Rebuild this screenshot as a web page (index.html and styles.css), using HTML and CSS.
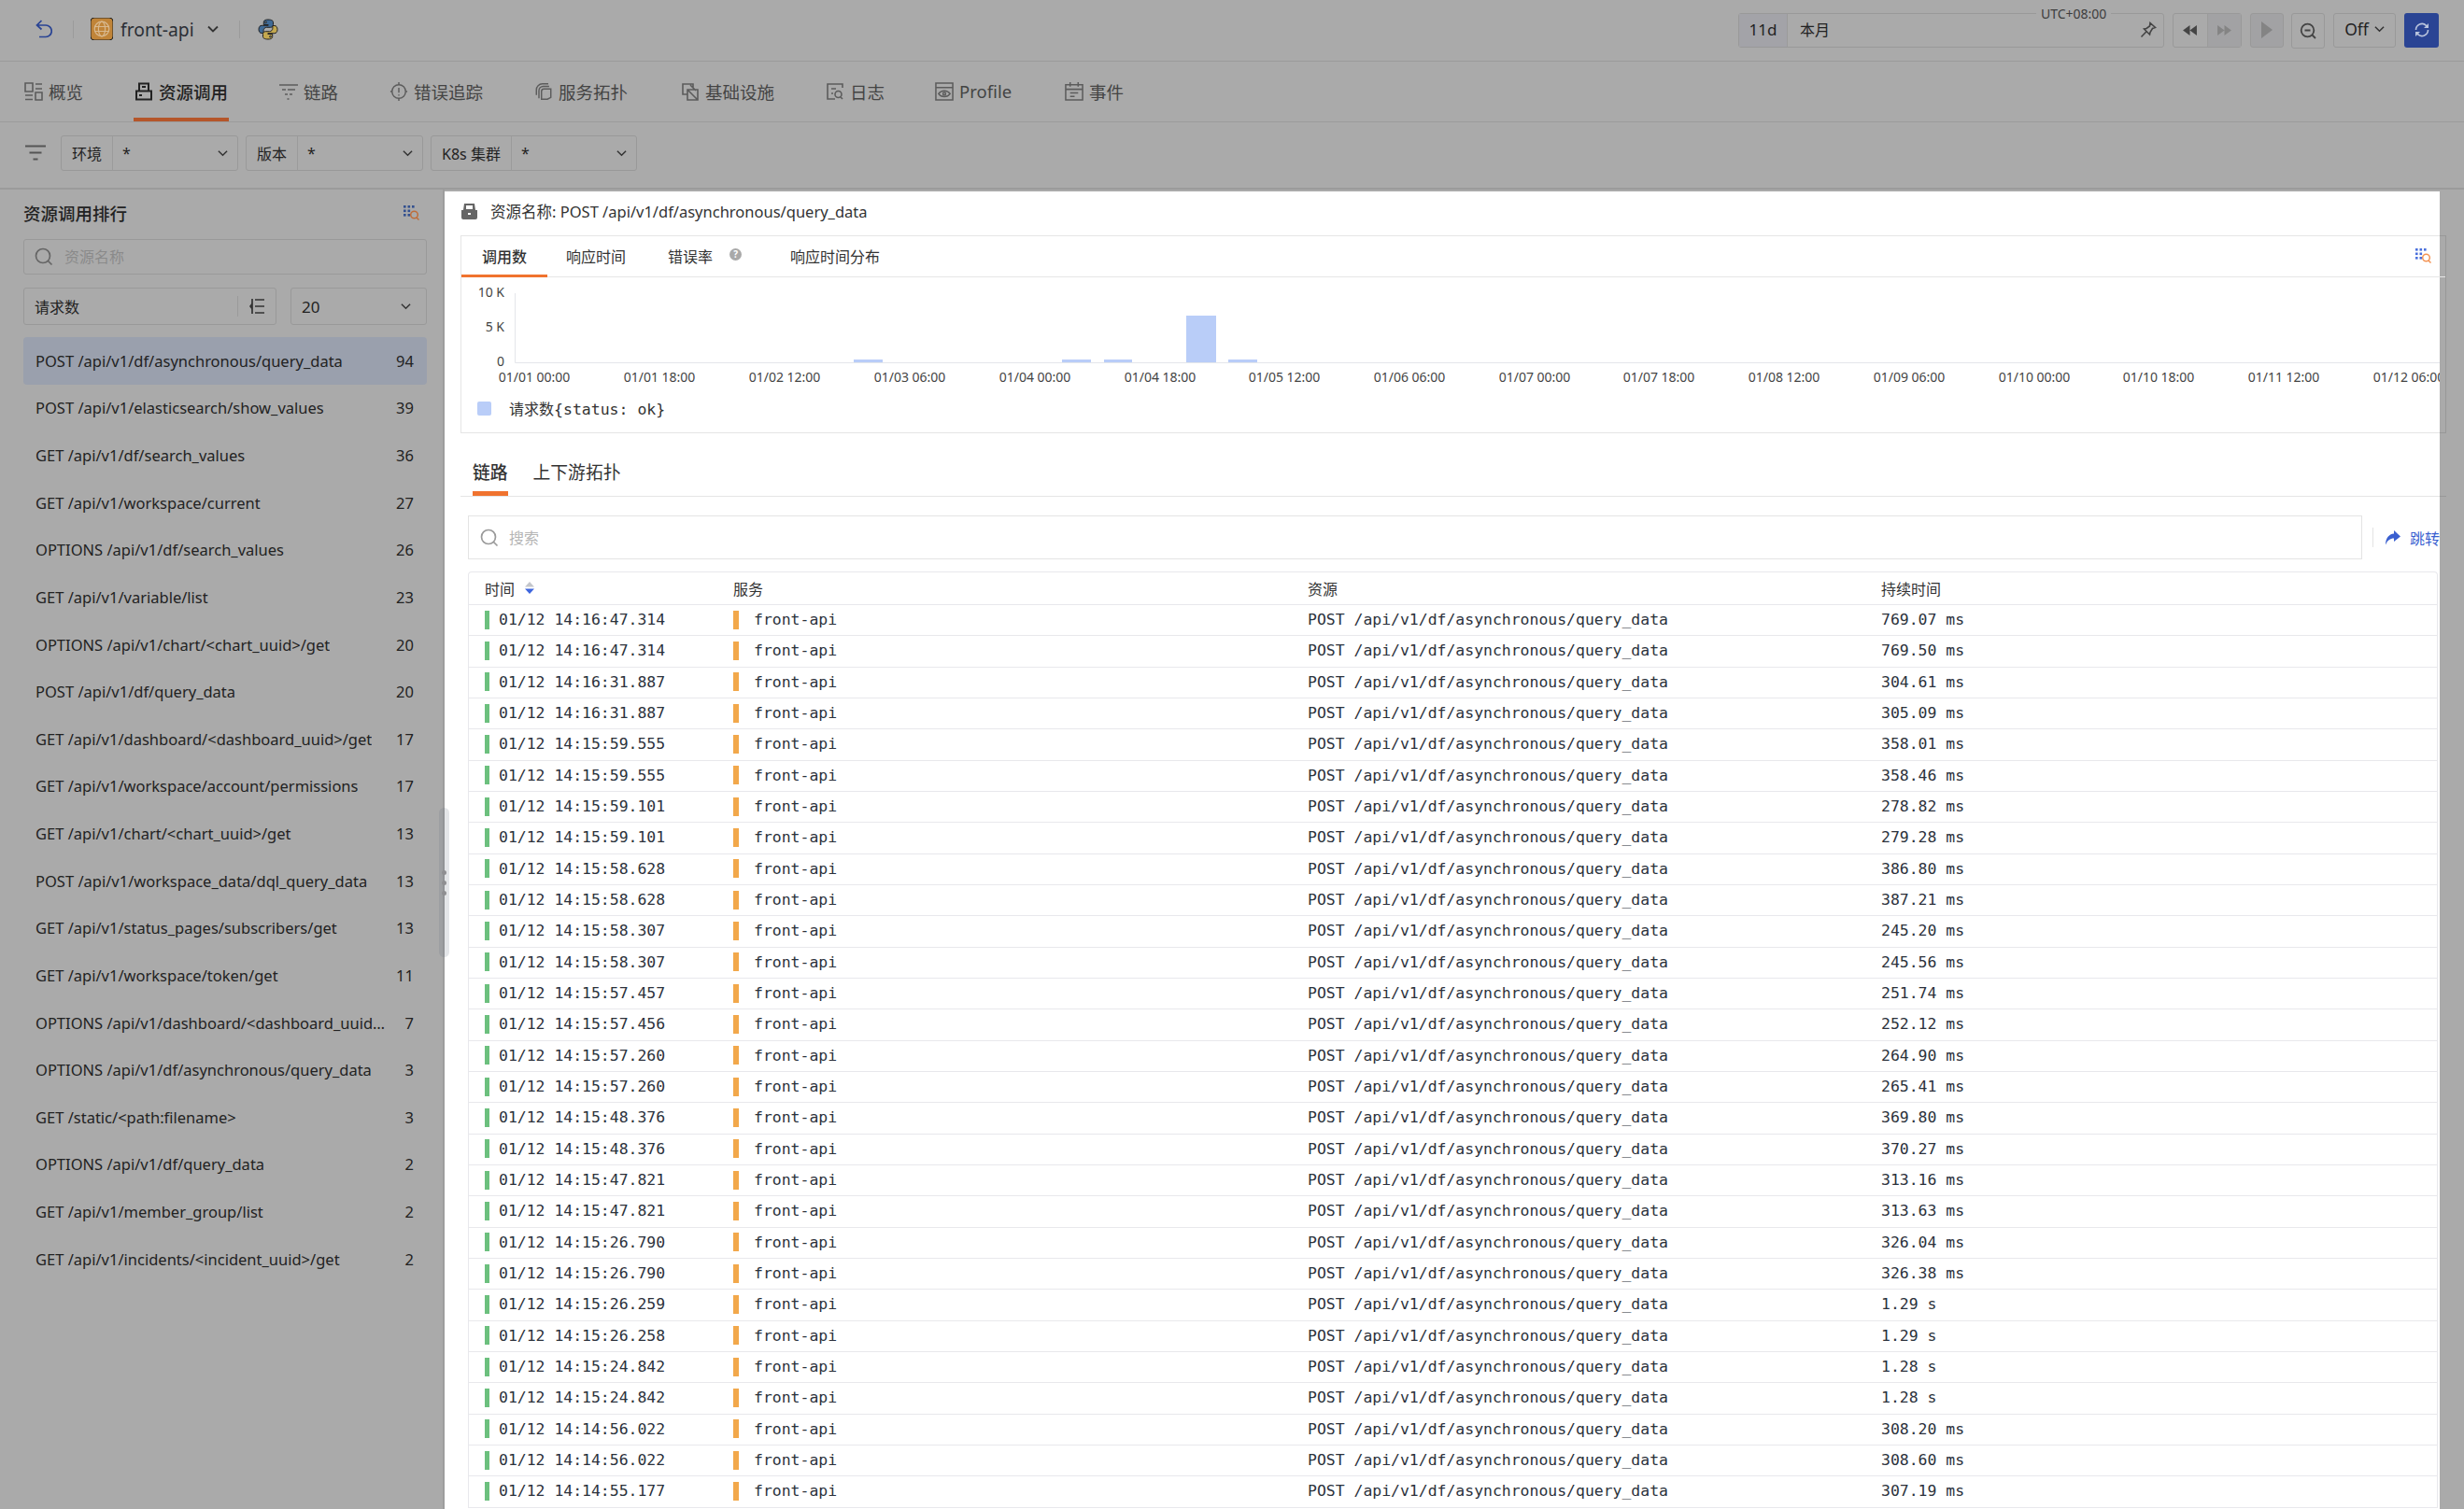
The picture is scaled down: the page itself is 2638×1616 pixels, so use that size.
FILE: index.html
```html
<!DOCTYPE html>
<html lang="zh">
<head>
<meta charset="utf-8">
<title>资源调用</title>
<link rel="stylesheet" href="styles.css">
</head>
<body>
<div class="page">
  <header class="topbar">
    <svg class="i-back" viewBox="0 0 18 20"><path d="M6.500 1 1.500 6 6.500 10.500M1.500 6H11a5.800 5.800 0 0 1 0 12.500H4"/></svg>
    <span class="vline v1"></span>
    <svg class="i-logo" viewBox="0 0 24 24"><rect width="24" height="24" rx="4" fill="#c08438"/><g fill="none" stroke="#d8b98f" stroke-width="1.200"><circle cx="12" cy="12" r="7.800"/><ellipse cx="12" cy="12" rx="3.600" ry="7.800"/><path d="M4.500 9.500h15M4.500 14.500h15"/></g></svg>
    <span class="app-name">front-api</span>
    <svg class="i-chev big" viewBox="0 0 12 8"><path d="M1 1.500 6 6.500 11 1.500"/></svg>
    <span class="vline v2"></span>
    <svg class="i-py" viewBox="0 0 22 23"><path fill="#3f6a96" d="M11 1C6.800 1 6.300 2.600 6.300 4v2.500h4.900v.8H4.300C2.300 7.300 1 8.900 1 11.400s1.300 4.100 3.100 4.100h2v-2.800c0-1.900 1.600-3.400 3.400-3.400h4.200c1.500 0 2.800-1.200 2.800-2.800V4c0-1.700-1.400-3-5.500-3z"/><path fill="#c4a84f" d="M11 22c4.200 0 4.700-1.600 4.700-3v-2.500h-4.900v-.8h6.900c2 0 3.300-1.600 3.300-4.100s-1.300-4.100-3.100-4.100h-2v2.800c0 1.900-1.600 3.400-3.400 3.400H8.300c-1.500 0-2.800 1.200-2.800 2.800V19c0 1.700 1.400 3 5.500 3z"/><circle cx="8.500" cy="3.800" r=".9" fill="#aaa"/><circle cx="13.500" cy="19.200" r=".9" fill="#aaa"/></svg>
    <div class="tools">
      <div class="timebox">
        <span class="t-len">11d</span>
        <span class="t-val">本月</span>
        <span class="t-utc">UTC+08:00</span>
        <svg class="i-pin" viewBox="0 0 18 18"><path d="M11 1.500 16.500 6.500 13.500 7.500 11 11.500 10.500 14 4.500 8 7 7.500 10.500 5zM6.800 11 1.500 16.500"/></svg>
      </div>
      <div class="btn-pair">
        <span class="tbtn"><svg class="i-tri" viewBox="0 0 18 14"><path d="M9 1v12L1 7zM17 1v12L9 7z"/></svg></span>
        <span class="tbtn off"><svg class="i-tri dim" viewBox="0 0 18 14"><path d="M1 1v12l8-6zM9 1v12l8-6z"/></svg></span>
      </div>
      <span class="tbtn solo off"><svg class="i-play" viewBox="0 0 12 18"><path d="M0 0v18l12-9z"/></svg></span>
      <span class="tbtn solo tall"><svg class="i-zoom" viewBox="0 0 18 18"><circle cx="8.500" cy="8.500" r="6.800"/><path d="M5.500 8.500h6M13.500 13.500l3.500 3.500"/></svg></span>
      <span class="tbtn off-sel">Off <svg class="i-chev" viewBox="0 0 12 8"><path d="M1 1.500 6 6.500 11 1.500"/></svg></span>
      <span class="refresh"><svg viewBox="0 0 18 18"><path d="M2.500 9a6.500 6.500 0 0 1 11-4.700L15.500 6M15.500 9a6.500 6.500 0 0 1-11 4.700L2.500 12"/><path class="fillp" d="M16 2v5h-5zM2 16v-5h5z"/></svg></span>
    </div>
  </header>

  <nav class="navtabs">
    <a class="nav n1"><svg viewBox="0 0 20 20"><path d="M1 1h8v9H1zM12 2h7M12 7h7M1 14h8M1 18.500h8M12 11h7v8h-7z"/></svg>概览</a>
    <a class="nav n2 on"><svg viewBox="0 0 20 20"><path d="M5 1.500h10v8H5zM2 9.500h16v9H2zM8 5h4M5 14h3"/></svg>资源调用</a>
    <a class="nav n3"><svg viewBox="0 0 20 20"><path d="M0 3h20M3 8h4M9 8h8M6 13h3M11 13h3M8.500 18h2"/></svg>链路</a>
    <a class="nav n4"><svg viewBox="0 0 20 22"><circle cx="10" cy="11" r="8"/><path d="M10 0v3M10 19v3M10 6.500v6M10 14.500v1.500M0 11h2M18 11h2"/></svg>错误追踪</a>
    <a class="nav n5"><svg viewBox="0 0 21 22"><path d="M2 15V9a7 7 0 0 1 7-7h7M5 19V10a5 5 0 0 1 5-5h7M8 20V11a3 3 0 0 1 3-3h8v10l-4 2z"/></svg>服务拓扑</a>
    <a class="nav n6"><svg viewBox="0 0 20 20"><path d="M13 6V2H2v11h5M7 8h11v11H7zM7 8l11 11M10 3l6 6"/></svg>基础设施</a>
    <a class="nav n7"><svg viewBox="0 0 18 20"><path d="M17 6V2H1v16h8M5 7h5M5 12h2M17 18l-2-2"/><circle cx="12.500" cy="13" r="3.500"/></svg>日志</a>
    <a class="nav n8"><svg viewBox="0 0 21 21"><path d="M1 1h19v19H1zM1 6h19M4 13c3-4.500 10-4.500 13 0-3 4.500-10 4.500-13 0z"/><circle cx="10.500" cy="13" r="1.500"/></svg>Profile</a>
    <a class="nav n9"><svg viewBox="0 0 21 21"><path d="M1 3h19v17H1zM6 0v5M15 0v5M1 8h19M6 12h9M6 16h5"/></svg>事件</a>
  </nav>

  <div class="filters">
    <svg class="i-filter" viewBox="0 0 22 17"><path d="M0 1.500h22M4.500 8.500h13M8.500 15.500h5"/></svg>
    <div class="fsel w190"><span class="flabel w55">环境</span><span class="fval">*</span><svg class="i-chev" viewBox="0 0 12 8"><path d="M1 1.500 6 6.500 11 1.500"/></svg></div>
    <div class="fsel w190"><span class="flabel w55">版本</span><span class="fval">*</span><svg class="i-chev" viewBox="0 0 12 8"><path d="M1 1.500 6 6.500 11 1.500"/></svg></div>
    <div class="fsel w221"><span class="flabel w86">K8s 集群</span><span class="fval">*</span><svg class="i-chev" viewBox="0 0 12 8"><path d="M1 1.500 6 6.500 11 1.500"/></svg></div>
  </div>

  <main class="main">
    <aside class="sidebar">
      <div class="side-title"><h2>资源调用排行</h2>
        <svg class="i-grid" viewBox="0 0 17 16"><g fill="#33508f"><rect x="0" y="0" width="2.600" height="2.600"/><rect x="4.500" y="0" width="2.600" height="2.600"/><rect x="9" y="0" width="2.600" height="2.600"/><rect x="0" y="4.500" width="2.600" height="2.600"/><rect x="4.500" y="4.500" width="2.600" height="2.600"/><rect x="0" y="9" width="2.600" height="2.600"/><rect x="4.500" y="9" width="2.600" height="2.600"/></g><circle cx="11.500" cy="10" r="3.800" fill="none" stroke="#bf6d3a" stroke-width="1.500"/><path d="M14 13l2.500 2.500" stroke="#bf6d3a" stroke-width="1.500"/></svg>
      </div>
      <div class="side-search"><svg class="i-search" viewBox="0 0 20 20"><circle cx="9" cy="9" r="7.500"/><path d="M14.500 14.500l4 4"/></svg><span>资源名称</span></div>
      <div class="side-sel">
        <div class="sel-metric"><span>请求数</span><svg class="i-sort" viewBox="0 0 16 18"><path d="M6 2h10M6 9h10M6 16h10M3 1v16"/><path class="fillp" d="M3 5 0 9l3 4z"/></svg></div>
        <div class="sel-top"><span>20</span><svg class="i-chev" viewBox="0 0 12 8"><path d="M1 1.500 6 6.500 11 1.500"/></svg></div>
      </div>
      <ul class="rank">
        <li class="on"><span>POST /api/v1/df/asynchronous/query_data</span><b>94</b></li>
        <li><span>POST /api/v1/elasticsearch/show_values</span><b>39</b></li>
        <li><span>GET /api/v1/df/search_values</span><b>36</b></li>
        <li><span>GET /api/v1/workspace/current</span><b>27</b></li>
        <li><span>OPTIONS /api/v1/df/search_values</span><b>26</b></li>
        <li><span>GET /api/v1/variable/list</span><b>23</b></li>
        <li><span>OPTIONS /api/v1/chart/&lt;chart_uuid&gt;/get</span><b>20</b></li>
        <li><span>POST /api/v1/df/query_data</span><b>20</b></li>
        <li><span>GET /api/v1/dashboard/&lt;dashboard_uuid&gt;/get</span><b>17</b></li>
        <li><span>GET /api/v1/workspace/account/permissions</span><b>17</b></li>
        <li><span>GET /api/v1/chart/&lt;chart_uuid&gt;/get</span><b>13</b></li>
        <li><span>POST /api/v1/workspace_data/dql_query_data</span><b>13</b></li>
        <li><span>GET /api/v1/status_pages/subscribers/get</span><b>13</b></li>
        <li><span>GET /api/v1/workspace/token/get</span><b>11</b></li>
        <li><span>OPTIONS /api/v1/dashboard/&lt;dashboard_uuid&gt;/get</span><b>7</b></li>
        <li><span>OPTIONS /api/v1/df/asynchronous/query_data</span><b>3</b></li>
        <li><span>GET /static/&lt;path:filename&gt;</span><b>3</b></li>
        <li><span>OPTIONS /api/v1/df/query_data</span><b>2</b></li>
        <li><span>GET /api/v1/member_group/list</span><b>2</b></li>
        <li><span>GET /api/v1/incidents/&lt;incident_uuid&gt;/get</span><b>2</b></li>
      </ul>
    </aside>
  </main>

  <section class="drawer">
    <div class="drawer-head">
      <svg class="i-lock" viewBox="0 0 17 17"><path fill="#666" d="M3 0h11l1 7h2v8a2 2 0 0 1-2 2H2a2 2 0 0 1-2-2V7h2zM5 2v4h7V2zM7 10v2h3v-2z"/></svg>
      <span>资源名称: POST /api/v1/df/asynchronous/query_data</span>
    </div>
    <div class="panel">
      <div class="ptabs">
        <a class="ptab p1 on">调用数</a>
        <a class="ptab p2">响应时间</a>
        <a class="ptab p3">错误率</a>
        <span class="qmark">?</span>
        <a class="ptab p4">响应时间分布</a>
        <svg class="i-grid pgrid" viewBox="0 0 17 16"><g fill="#4a6fdc"><rect x="0" y="0" width="2.600" height="2.600"/><rect x="4.500" y="0" width="2.600" height="2.600"/><rect x="9" y="0" width="2.600" height="2.600"/><rect x="0" y="4.500" width="2.600" height="2.600"/><rect x="4.500" y="4.500" width="2.600" height="2.600"/><rect x="0" y="9" width="2.600" height="2.600"/><rect x="4.500" y="9" width="2.600" height="2.600"/></g><circle cx="11.500" cy="10" r="3.800" fill="none" stroke="#f39455" stroke-width="1.500"/><path d="M14 13l2.500 2.500" stroke="#f39455" stroke-width="1.500"/></svg>
      </div>
      <svg class="chart" width="2118" height="122" viewBox="0 0 2118 122">
        <path class="axis" d="M57.500 17V91.500H2118"/>
        <g class="bars">
          <rect x="420" y="88" width="31" height="3"/>
          <rect x="643" y="88" width="31" height="3"/>
          <rect x="688" y="88" width="30" height="3"/>
          <rect x="776" y="41" width="32" height="50"/>
          <rect x="821" y="88" width="31" height="3"/>
        </g>
        <g class="ylab">
          <text x="46" y="21">10 K</text>
          <text x="46" y="58">5 K</text>
          <text x="46" y="95">0</text>
        </g>
        <g class="xlab">
          <text x="78" y="112">01/01 00:00</text>
          <text x="212" y="112">01/01 18:00</text>
          <text x="346" y="112">01/02 12:00</text>
          <text x="480" y="112">01/03 06:00</text>
          <text x="614" y="112">01/04 00:00</text>
          <text x="748" y="112">01/04 18:00</text>
          <text x="881" y="112">01/05 12:00</text>
          <text x="1015" y="112">01/06 06:00</text>
          <text x="1149" y="112">01/07 00:00</text>
          <text x="1282" y="112">01/07 18:00</text>
          <text x="1416" y="112">01/08 12:00</text>
          <text x="1550" y="112">01/09 06:00</text>
          <text x="1684" y="112">01/10 00:00</text>
          <text x="1817" y="112">01/10 18:00</text>
          <text x="1951" y="112">01/11 12:00</text>
          <text x="2085" y="112">01/12 06:00</text>
        </g>
      </svg>
      <div class="legend"><i></i><span>请求数<code>{status: ok}</code></span></div>
    </div>
    <div class="subtabs">
      <a class="stab on">链路</a>
      <a class="stab">上下游拓扑</a>
    </div>
    <div class="searchrow">
      <div class="searchbox"><svg class="i-search" viewBox="0 0 20 20"><circle cx="9" cy="9" r="7.500"/><path d="M14.500 14.500l4 4"/></svg><span>搜索</span></div>
      <span class="sep"></span>
      <a class="jump"><svg viewBox="0 0 17 16"><path d="M10 0l7 6.500L10 12V8.500C6 8.500 3 10.500 1 15.500 1 8.500 4.500 4 10 3.500z"/></svg>跳转</a>
    </div>
    <div class="table">
      <div class="row head">
        <span class="c-time">时间<svg class="i-sortcol" viewBox="0 0 10 13"><path fill="#c4c6cc" d="M5 0l5 5.500H0z"/><path fill="#3f66de" d="M5 13l5-5.500H0z"/></svg></span>
        <span>服务</span><span>资源</span><span>持续时间</span>
      </div>
      <div class="row"><span class="c-time"><i class="bar ok"></i>01/12 14:16:47.314</span><span class="c-svc"><i class="bar svc"></i>front-api</span><span>POST /api/v1/df/asynchronous/query_data</span><span>769.07 ms</span></div>
      <div class="row"><span class="c-time"><i class="bar ok"></i>01/12 14:16:47.314</span><span class="c-svc"><i class="bar svc"></i>front-api</span><span>POST /api/v1/df/asynchronous/query_data</span><span>769.50 ms</span></div>
      <div class="row"><span class="c-time"><i class="bar ok"></i>01/12 14:16:31.887</span><span class="c-svc"><i class="bar svc"></i>front-api</span><span>POST /api/v1/df/asynchronous/query_data</span><span>304.61 ms</span></div>
      <div class="row"><span class="c-time"><i class="bar ok"></i>01/12 14:16:31.887</span><span class="c-svc"><i class="bar svc"></i>front-api</span><span>POST /api/v1/df/asynchronous/query_data</span><span>305.09 ms</span></div>
      <div class="row"><span class="c-time"><i class="bar ok"></i>01/12 14:15:59.555</span><span class="c-svc"><i class="bar svc"></i>front-api</span><span>POST /api/v1/df/asynchronous/query_data</span><span>358.01 ms</span></div>
      <div class="row"><span class="c-time"><i class="bar ok"></i>01/12 14:15:59.555</span><span class="c-svc"><i class="bar svc"></i>front-api</span><span>POST /api/v1/df/asynchronous/query_data</span><span>358.46 ms</span></div>
      <div class="row"><span class="c-time"><i class="bar ok"></i>01/12 14:15:59.101</span><span class="c-svc"><i class="bar svc"></i>front-api</span><span>POST /api/v1/df/asynchronous/query_data</span><span>278.82 ms</span></div>
      <div class="row"><span class="c-time"><i class="bar ok"></i>01/12 14:15:59.101</span><span class="c-svc"><i class="bar svc"></i>front-api</span><span>POST /api/v1/df/asynchronous/query_data</span><span>279.28 ms</span></div>
      <div class="row"><span class="c-time"><i class="bar ok"></i>01/12 14:15:58.628</span><span class="c-svc"><i class="bar svc"></i>front-api</span><span>POST /api/v1/df/asynchronous/query_data</span><span>386.80 ms</span></div>
      <div class="row"><span class="c-time"><i class="bar ok"></i>01/12 14:15:58.628</span><span class="c-svc"><i class="bar svc"></i>front-api</span><span>POST /api/v1/df/asynchronous/query_data</span><span>387.21 ms</span></div>
      <div class="row"><span class="c-time"><i class="bar ok"></i>01/12 14:15:58.307</span><span class="c-svc"><i class="bar svc"></i>front-api</span><span>POST /api/v1/df/asynchronous/query_data</span><span>245.20 ms</span></div>
      <div class="row"><span class="c-time"><i class="bar ok"></i>01/12 14:15:58.307</span><span class="c-svc"><i class="bar svc"></i>front-api</span><span>POST /api/v1/df/asynchronous/query_data</span><span>245.56 ms</span></div>
      <div class="row"><span class="c-time"><i class="bar ok"></i>01/12 14:15:57.457</span><span class="c-svc"><i class="bar svc"></i>front-api</span><span>POST /api/v1/df/asynchronous/query_data</span><span>251.74 ms</span></div>
      <div class="row"><span class="c-time"><i class="bar ok"></i>01/12 14:15:57.456</span><span class="c-svc"><i class="bar svc"></i>front-api</span><span>POST /api/v1/df/asynchronous/query_data</span><span>252.12 ms</span></div>
      <div class="row"><span class="c-time"><i class="bar ok"></i>01/12 14:15:57.260</span><span class="c-svc"><i class="bar svc"></i>front-api</span><span>POST /api/v1/df/asynchronous/query_data</span><span>264.90 ms</span></div>
      <div class="row"><span class="c-time"><i class="bar ok"></i>01/12 14:15:57.260</span><span class="c-svc"><i class="bar svc"></i>front-api</span><span>POST /api/v1/df/asynchronous/query_data</span><span>265.41 ms</span></div>
      <div class="row"><span class="c-time"><i class="bar ok"></i>01/12 14:15:48.376</span><span class="c-svc"><i class="bar svc"></i>front-api</span><span>POST /api/v1/df/asynchronous/query_data</span><span>369.80 ms</span></div>
      <div class="row"><span class="c-time"><i class="bar ok"></i>01/12 14:15:48.376</span><span class="c-svc"><i class="bar svc"></i>front-api</span><span>POST /api/v1/df/asynchronous/query_data</span><span>370.27 ms</span></div>
      <div class="row"><span class="c-time"><i class="bar ok"></i>01/12 14:15:47.821</span><span class="c-svc"><i class="bar svc"></i>front-api</span><span>POST /api/v1/df/asynchronous/query_data</span><span>313.16 ms</span></div>
      <div class="row"><span class="c-time"><i class="bar ok"></i>01/12 14:15:47.821</span><span class="c-svc"><i class="bar svc"></i>front-api</span><span>POST /api/v1/df/asynchronous/query_data</span><span>313.63 ms</span></div>
      <div class="row"><span class="c-time"><i class="bar ok"></i>01/12 14:15:26.790</span><span class="c-svc"><i class="bar svc"></i>front-api</span><span>POST /api/v1/df/asynchronous/query_data</span><span>326.04 ms</span></div>
      <div class="row"><span class="c-time"><i class="bar ok"></i>01/12 14:15:26.790</span><span class="c-svc"><i class="bar svc"></i>front-api</span><span>POST /api/v1/df/asynchronous/query_data</span><span>326.38 ms</span></div>
      <div class="row"><span class="c-time"><i class="bar ok"></i>01/12 14:15:26.259</span><span class="c-svc"><i class="bar svc"></i>front-api</span><span>POST /api/v1/df/asynchronous/query_data</span><span>1.29 s</span></div>
      <div class="row"><span class="c-time"><i class="bar ok"></i>01/12 14:15:26.258</span><span class="c-svc"><i class="bar svc"></i>front-api</span><span>POST /api/v1/df/asynchronous/query_data</span><span>1.29 s</span></div>
      <div class="row"><span class="c-time"><i class="bar ok"></i>01/12 14:15:24.842</span><span class="c-svc"><i class="bar svc"></i>front-api</span><span>POST /api/v1/df/asynchronous/query_data</span><span>1.28 s</span></div>
      <div class="row"><span class="c-time"><i class="bar ok"></i>01/12 14:15:24.842</span><span class="c-svc"><i class="bar svc"></i>front-api</span><span>POST /api/v1/df/asynchronous/query_data</span><span>1.28 s</span></div>
      <div class="row"><span class="c-time"><i class="bar ok"></i>01/12 14:14:56.022</span><span class="c-svc"><i class="bar svc"></i>front-api</span><span>POST /api/v1/df/asynchronous/query_data</span><span>308.20 ms</span></div>
      <div class="row"><span class="c-time"><i class="bar ok"></i>01/12 14:14:56.022</span><span class="c-svc"><i class="bar svc"></i>front-api</span><span>POST /api/v1/df/asynchronous/query_data</span><span>308.60 ms</span></div>
      <div class="row"><span class="c-time"><i class="bar ok"></i>01/12 14:14:55.177</span><span class="c-svc"><i class="bar svc"></i>front-api</span><span>POST /api/v1/df/asynchronous/query_data</span><span>307.19 ms</span></div>
    </div>
  </section>

  <div class="handle"><i></i><i></i><i></i></div>
</div>
</body>
</html>
```
FILE: styles.css
```css
* { box-sizing: border-box; }
html, body { margin: 0; padding: 0; }
body { font-family: "Noto Sans", "Noto Sans CJK SC", sans-serif; font-size: 16px; color: #222; background: #aaa; }
a { color: inherit; text-decoration: none; }
svg { display: block; flex: none; fill: none; stroke: currentColor; }
.page { position: relative; width: 2638px; height: 1616px; overflow: hidden; background: #aaa; }

/* top bar */
.topbar { height: 66px; display: flex; align-items: center; border-bottom: 1px solid #9b9b9b; padding-left: 38px; padding-bottom: 3px; }
.i-back { width: 18px; height: 20px; color: #2a4494; stroke-width: 1.7; }
.vline { width: 1px; height: 19px; background: #9b9b9b; }
.v1 { margin-left: 22px; }
.i-logo { width: 24px; height: 24px; margin-left: 18px; }
.app-name { margin-left: 8px; font-size: 19.300px; color: #2b2f36; }
.i-chev { width: 11px; height: 8px; stroke-width: 1.6; color: #333; }
.i-chev.big { width: 12px; height: 8px; margin-left: 14px; stroke-width: 1.8; }
.v2 { margin-left: 22px; }
.i-py { width: 22px; height: 23px; margin-left: 19px; }
.tools { margin-left: auto; margin-right: 27px; display: flex; align-items: flex-start; gap: 9px; padding-top: 3px; }
.timebox { position: relative; width: 456px; height: 37px; border: 1px solid #999; border-radius: 3px; display: flex; align-items: center; }
.t-len { width: 52px; height: 100%; display: flex; align-items: center; justify-content: center; background: #a3a3a8; border-right: 1px solid #9b9b9b; font-size: 17px; color: #222; padding-bottom: 2px; }
.t-val { margin-left: 13px; font-size: 16px; padding-bottom: 2px; }
.t-utc { position: absolute; top: -9px; left: 318px; padding: 0 5px; background: #aaa; font-size: 14px; line-height: 18px; color: #3d3d3d; }
.i-pin { width: 18px; height: 18px; margin-left: auto; margin-right: 7px; stroke-width: 1.6; color: #444; }
.btn-pair { display: flex; width: 74px; height: 37px; border: 1px solid #999; border-radius: 3px; }
.btn-pair .tbtn { flex: 1; display: flex; align-items: center; justify-content: center; }
.btn-pair .off { background: #a2a2a4; border-left: 1px solid #9b9b9b; }
.i-tri { width: 17px; height: 13px; fill: #444; stroke: none; }
.i-tri.dim { fill: #848484; }
.solo { width: 36px; height: 37px; border: 1px solid #999; border-radius: 3px; display: flex; align-items: center; justify-content: center; }
.solo.off { background: #a2a2a4; }
.solo.tall { height: 38px; margin-left: -1px; }
.i-play { width: 12px; height: 18px; fill: #848484; stroke: none; }
.i-zoom { width: 18px; height: 18px; stroke-width: 1.8; color: #444; }
.off-sel { width: 67px; height: 37px; border: 1px solid #999; border-radius: 3px; display: flex; align-items: center; justify-content: center; gap: 6px; font-size: 17.500px; color: #222; padding-bottom: 2px; }
.refresh { width: 37px; height: 37px; border-radius: 3px; background: #2a4494; display: flex; align-items: center; justify-content: center; color: #b9c4dd; }
.refresh svg { width: 18px; height: 18px; stroke-width: 1.6; }
.fillp { fill: currentColor; stroke: none; }

/* nav tabs */
.navtabs { position: relative; height: 65px; display: flex; border-bottom: 1px solid #9b9b9b; color: #444; font-size: 18.500px; padding-left: 26px; }
.nav { display: flex; align-items: center; height: 64px; gap: 6px; padding-bottom: 1px; }
.nav svg { width: 20px; height: 20px; stroke-width: 1.6; color: #5c5c5c; }
.n2 { margin-left: 54px; padding: 0 1px; color: #222; font-weight: 500; border-bottom: 4px solid #b5562a; padding-top: 4px; }
.n2 svg { color: #222; stroke-width: 2; }
.n3 { margin-left: 54px; }
.n4 { margin-left: 55px; }
.n5 { margin-left: 55px; }
.n6 { margin-left: 57px; }
.n7 { margin-left: 55px; }
.n8 { margin-left: 54px; }
.n9 { margin-left: 57px; }

/* filters */
.filters { height: 72px; display: flex; align-items: center; border-bottom: 2px solid #9b9b9b; padding: 0 0 5px 27px; color: #222; }
.i-filter { width: 22px; height: 17px; stroke-width: 2.200; color: #555; margin-right: 16px; }
.fsel { height: 38px; border: 1px solid #999; border-radius: 3px; display: flex; align-items: center; margin-right: 8px; padding-right: 10px; }
.w190 { width: 190px; }
.w221 { width: 221px; }
.flabel { height: 100%; display: flex; align-items: center; justify-content: center; border-right: 1px solid #9b9b9b; font-size: 16px; }
.w55 { width: 55px; }
.w86 { width: 86px; }
.fval { flex: 1; padding-left: 10px; font-size: 16px; }

/* sidebar */
.main { display: flex; }
.sidebar { width: 476px; height: 1413px; border-right: 2px solid #9d9d9d; padding: 0 17px 0 25px; }
.side-title { height: 53px; display: flex; align-items: center; justify-content: space-between; padding-bottom: 3px; padding-right: 8px; }
.side-title h2 { margin: 0; font-size: 18.500px; font-weight: 500; color: #222; }
.i-grid { width: 17px; height: 16px; stroke: none; }
.side-search { height: 38px; border: 1px solid #999; border-radius: 3px; display: flex; align-items: center; padding-left: 11px; gap: 12px; color: #8a8a8a; font-size: 16px; }
.side-search span { padding-bottom: 2px; }
.i-search { width: 20px; height: 20px; stroke-width: 1.700; color: #666; }
.side-sel { display: flex; gap: 15px; margin-top: 14px; height: 40px; }
.sel-metric { width: 271px; border: 1px solid #999; border-radius: 3px; display: flex; align-items: center; justify-content: space-between; padding: 0 12px 0 11px; font-size: 16px; position: relative; }
.sel-metric::before { content: ""; position: absolute; right: 40px; top: 8px; bottom: 8px; width: 1px; background: #9b9b9b; }
.i-sort { width: 16px; height: 18px; stroke-width: 1.700; color: #333; }
.sel-top { flex: 1; border: 1px solid #999; border-radius: 3px; display: flex; align-items: center; justify-content: space-between; padding: 0 16px 0 11px; font-size: 17px; }
.rank { list-style: none; margin: 13px 0 0; padding: 0; font-size: 16.500px; color: #222; }
.rank li { height: 50.630px; display: flex; align-items: center; justify-content: space-between; padding: 0 14px 0 13px; border-radius: 4px; gap: 10px; }
.rank li.on { background: #9aa0ad; }
.rank span { max-width: 375px; white-space: nowrap; overflow: hidden; text-overflow: ellipsis; }
.rank b { font-weight: 400; flex: none; }

/* drawer */
.drawer { position: absolute; left: 476px; top: 205px; width: 2136px; height: 1411px; background: #fff; color: #333; }
.drawer-head { height: 47px; display: flex; align-items: center; gap: 14px; padding: 0 0 5px 18px; font-size: 16.500px; }
.i-lock { width: 17px; height: 17px; stroke: none; }
.panel { margin-left: 17px; width: 2126px; height: 212px; border: 1px solid rgba(0,0,0,.1); }
.ptabs { position: relative; height: 44px; display: flex; align-items: center; border-bottom: 1px solid #e6e6e6; font-size: 16px; color: #333; }
.ptab { height: 44px; display: flex; align-items: center; padding-bottom: 1px; }
.p1 { width: 92px; justify-content: center; font-weight: 500; border-bottom: 3px solid #f0732f; padding-top: 2px; }
.p2 { margin-left: 20px; }
.p3 { margin-left: 45px; }
.p4 { margin-left: 52px; }
.qmark { width: 13px; height: 13px; margin-left: 18px; margin-bottom: 5px; border-radius: 50%; background: #a9a9a9; color: #fff; font-size: 10px; line-height: 13px; text-align: center; font-weight: 700; }
.pgrid { position: absolute; right: 15px; top: 13px; }
.chart { display: block; }
.axis { stroke: #e4e6ea; stroke-width: 1; fill: none; }
.bars rect { fill: #b9cdf8; stroke: none; }
.ylab text { font-size: 14px; text-anchor: end; fill: #444; stroke: none; }
.xlab text { font-size: 14px; text-anchor: middle; fill: #444; stroke: none; }
.legend { display: flex; align-items: center; gap: 19px; margin-left: 17px; margin-top: 6px; font-size: 16px; }
.legend i { width: 15px; height: 15px; border-radius: 2px; background: #b9cdf8; }
.legend code { font-family: "DejaVu Sans Mono", monospace; font-size: 16.500px; color: #333; }

.subtabs { margin-left: 17px; width: 2126px; height: 68px; display: flex; gap: 27px; border-bottom: 1px solid rgba(0,0,0,.1); padding-left: 13px; align-items: flex-end; font-size: 18.800px; color: #333; }
.stab { height: 100%; display: flex; align-items: center; padding-top: 19px; padding-bottom: 0; border-bottom: 5px solid transparent; }
.stab.on { font-weight: 500; border-bottom-color: #f0732f; }

.searchrow { margin: 20px 0 0 25px; display: flex; align-items: center; }
.searchbox { width: 2028px; height: 47px; border: 1px solid #e4e4e4; display: flex; align-items: center; gap: 11px; padding-left: 12px; color: #b5b5b5; font-size: 16px; }
.searchbox span { padding-bottom: 2px; }
.searchbox .i-search { color: #9a9a9a; }
.sep { width: 1px; height: 21px; margin-left: 11px; background: #e4e4e4; }
.jump { display: flex; align-items: center; gap: 10px; margin-left: 12px; color: #3a5fd0; font-size: 16px; }
.jump svg { width: 17px; height: 16px; fill: #3a5fd0; stroke: none; }

.table { margin: 13px 0 0 25px; width: 2109px; border: 1px solid #e8e8ec; border-bottom: 0; border-radius: 4px 4px 0 0; font-family: "DejaVu Sans Mono", "Noto Sans CJK SC", monospace; font-size: 16.450px; color: #2c323c; }
.row { display: grid; grid-template-columns: 266px 615px 614px 1fr; height: 33.330px; align-items: center; border-bottom: 1px solid #e8e8ec; }
.row > span { padding-left: 17px; display: flex; align-items: center; white-space: pre; padding-bottom: 1px; }
.row.head { height: 35px; font-family: "Noto Sans", "Noto Sans CJK SC", sans-serif; font-size: 16px; color: #333; }
.bar { display: block; height: 20px; }
.ok { width: 5px; background: #6cc07e; margin-right: 10px; }
.svc { width: 6px; background: #f2a84b; margin-right: 16px; }
.i-sortcol { width: 10px; height: 13px; stroke: none; margin-left: 11px; }

/* resize handle, straddles sidebar and drawer */
.handle { position: absolute; left: 470px; top: 865px; width: 11px; height: 160px; border-radius: 6px; background: rgba(100,110,130,.18); display: flex; flex-direction: column; align-items: center; justify-content: center; gap: 6px; }
.handle i { width: 5px; height: 5px; border-radius: 50%; background: #8f8f92; }
```
